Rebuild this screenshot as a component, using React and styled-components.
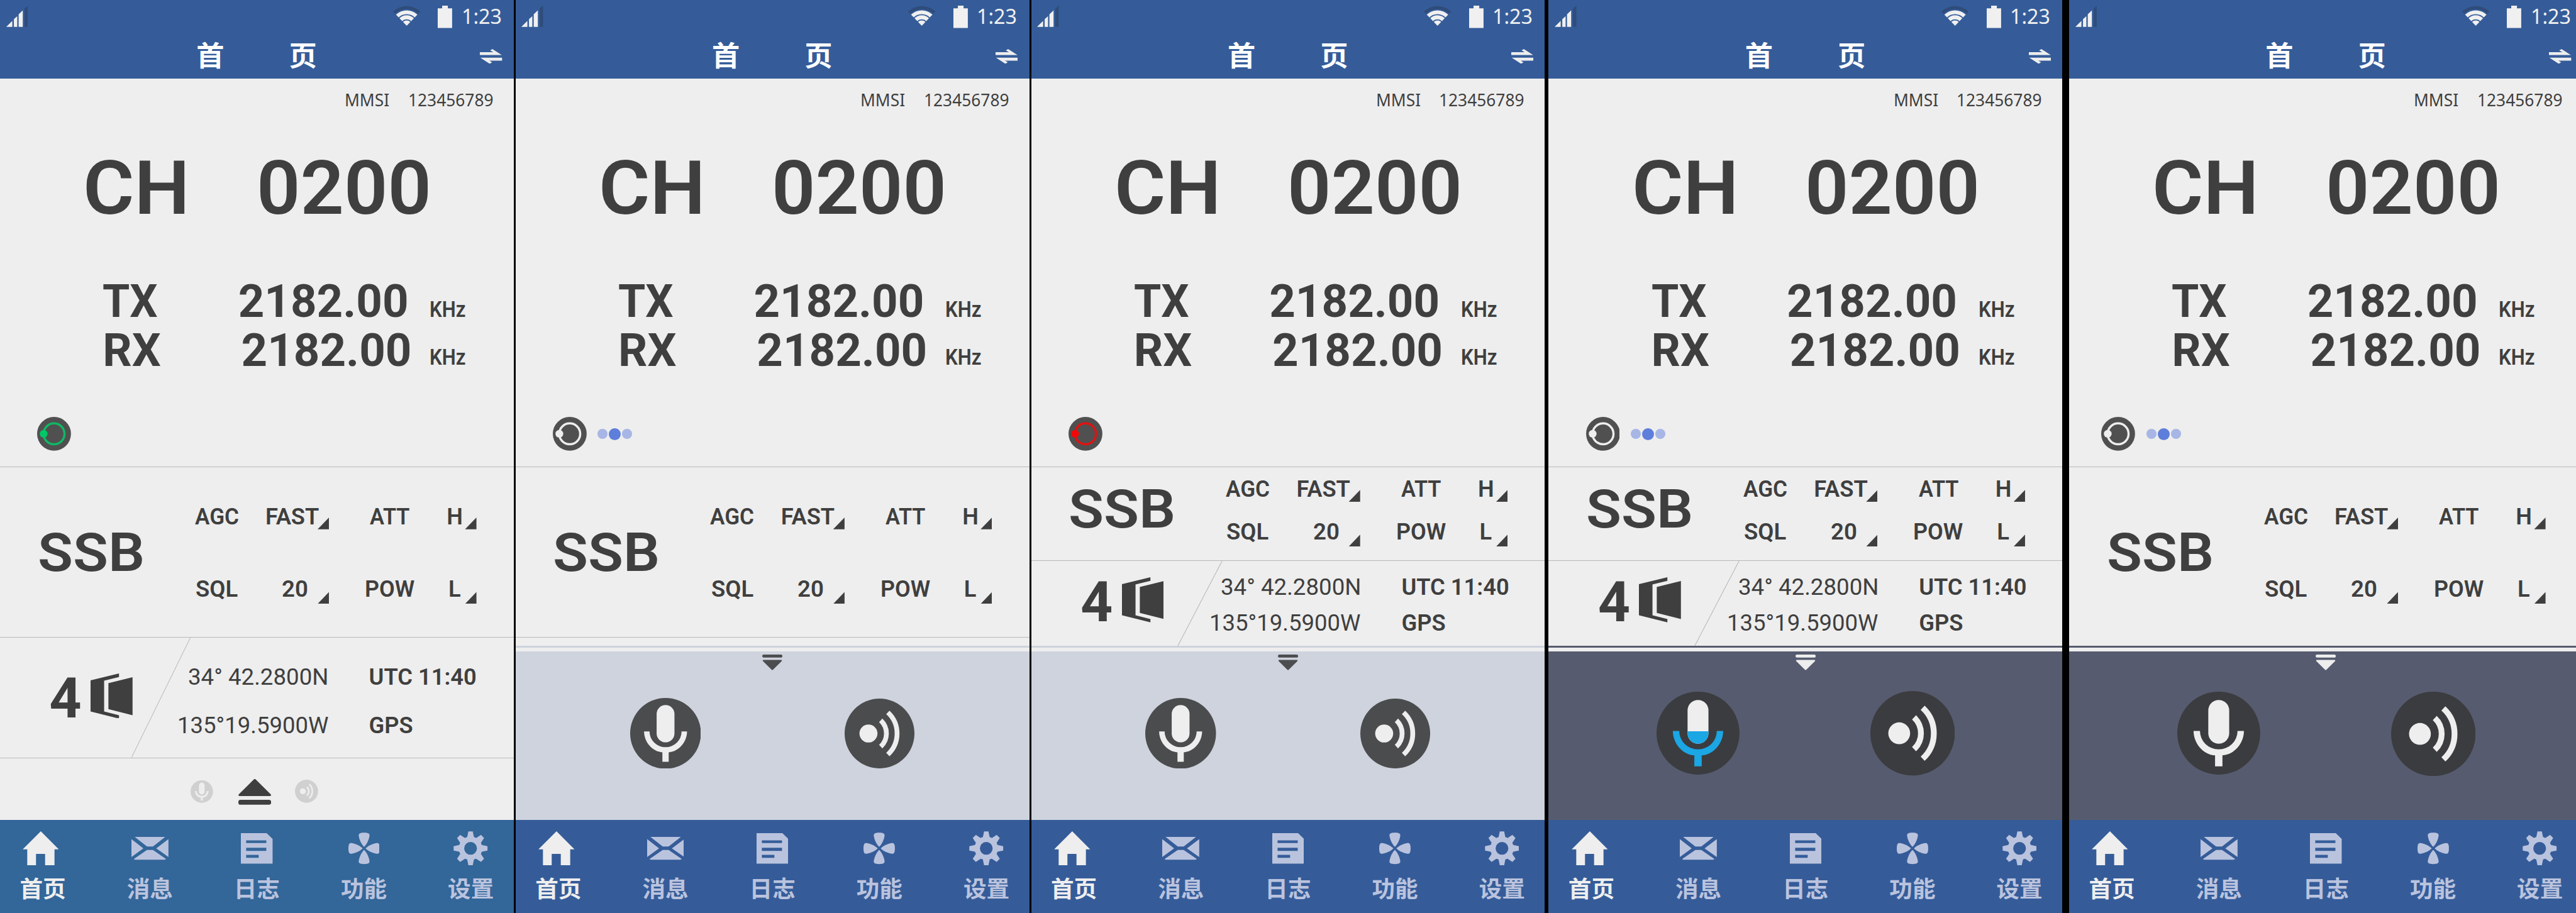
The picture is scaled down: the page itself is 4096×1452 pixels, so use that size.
import React from "react";
import styled, { createGlobalStyle, css } from "styled-components";

/* design unit: screens are specced at 1080 x 1920 */
const u = (n) => `${(n * 4096) / 5416}px`;

const C = {
  bar: "#355c99",
  nav: "#355c99",
  navAlt: "#336699",
  paper: "#eeeeee",
  ink: "#3f3f3f",
  navIdle: "#bac3de",
  line: "#b9b9b9",
};

const Global = createGlobalStyle`
  html, body { margin: 0; padding: 0; background: #000; overflow: hidden; }
  * { box-sizing: border-box; }
  svg { display: block; flex: none; }
`;

/* ---------- text ---------- */
const Text = styled.span`
  display: block;
  flex: none;
  width: max-content;
  white-space: pre;
  line-height: 1;
  font-family: Roboto, "Liberation Sans", sans-serif;
  font-size: ${(p) => u(p.$size)};
  font-weight: ${(p) => p.$weight || 400};
  margin-left: ${(p) => u(p.$dx || 0)};
  margin-top: ${(p) => u(p.$dy || 0)};
  ${(p) =>
    p.$stretch &&
    css`
      transform: scaleX(${p.$stretch});
      transform-origin: 0 50%;
    `}
`;

const Plain = styled(Text)`
  font-family: "Noto Sans", "Open Sans", sans-serif;
`;

const Han = styled(Text)`
  font-family: "Noto Sans CJK SC", sans-serif;
`;

/* ---------- page ---------- */
const Board = styled.main`
  display: flex;
  width: 4096px;
  height: 1452px;
  overflow: hidden;
  background: #000;
`;

const Screen = styled.section`
  flex: none;
  display: flex;
  flex-direction: column;
  width: ${u(1080)};
  height: ${u(1920)};
  margin-right: ${(p) => u(p.$gap)};
  background: ${C.paper};
  color: ${C.ink};
  overflow: hidden;
`;

/* ---------- header ---------- */
const Header = styled.header`
  flex: none;
  height: ${u(165.8)};
  background: ${C.bar};
  color: #fff;
`;

const StatusBar = styled.div`
  display: flex;
  align-items: flex-start;
  height: ${u(70)};
  padding: ${u(12)} 0 0 ${u(12.7)};
  color: #f0f0f0;
`;

const StatusRight = styled.div`
  display: flex;
  align-items: flex-start;
  margin-left: ${u(767.6)};
`;

const WifiSlot = styled.div`
  width: ${u(94.7)};
`;

const TitleBar = styled.div`
  display: flex;
  align-items: flex-start;
  padding: ${u(14.9)} 0 0 ${u(413)};
`;

const Title = styled.h1`
  display: flex;
  gap: ${u(136.2)};
  width: ${u(596.3)};
  margin: 0;
`;

const SwapButton = styled.div`
  padding-top: ${u(17.8)};
  color: ${C.paper};
`;

/* ---------- tuning display ---------- */
const Tuning = styled.div`
  flex: none;
  display: flex;
  flex-direction: column;
  height: ${u(815.8)};
  padding-top: ${u(26.2)};
`;

const MmsiRow = styled.div`
  display: flex;
  height: ${u(36)};
  padding-left: ${u(725)};
`;

const MmsiLabel = styled.div`
  width: ${u(133)};
`;

const ChannelRow = styled.div`
  display: flex;
  height: ${u(156)};
  margin-top: ${u(91.1)};
  padding-left: ${u(175)};
`;

const ChannelLabel = styled.div`
  width: ${u(364)};
`;

const FrequencyRow = styled.div`
  display: grid;
  grid-template-columns: ${u(285)} ${u(403)} auto;
  align-items: start;
  height: ${u(96)};
  margin-top: ${(p) => u(p.$top)};
  padding-left: ${u(215.7)};
`;

const IndicatorRow = styled.div`
  display: flex;
  align-items: center;
  gap: ${u(23.2)};
  height: ${u(71.2)};
  margin-top: ${u(90.3)};
  padding-left: ${(p) => u(p.$left)};
`;

const Dots = styled.div`
  display: flex;
  align-items: center;
  gap: ${u(2.8)};
`;

const Dot = styled.i`
  width: ${(p) => u(p.$big ? 25.2 : 20.8)};
  height: ${(p) => u(p.$big ? 25.2 : 20.8)};
  border-radius: 50%;
  background: ${(p) => (p.$big ? "#5e7edb" : "#a7b6e5")};
`;

/* ---------- mode ---------- */
const Mode = styled.div`
  flex: none;
  display: flex;
  height: ${(p) => u(p.$compact ? 196.6 : 358.4)};
  padding-left: ${u(78.7)};
  border-top: 1px solid ${C.line};
`;

const ModeName = styled.div`
  flex: none;
  width: ${u(326.6)};
  padding-top: ${(p) => u(p.$compact ? 32 : 124.2)};
`;

const Options = styled.div`
  display: flex;
  flex-direction: column;
  gap: ${(p) => u(p.$compact ? 41.5 : 104.2)};
  padding-top: ${(p) => u(p.$compact ? 22.4 : 80.2)};
`;

const OptionRow = styled.div`
  display: grid;
  grid-template-columns: ${[150, 112.4, 97.6, 172, 40.4, 24.6].map(u).join(" ")};
  align-items: start;
  height: ${u(48)};
`;

const Corner = styled.i`
  width: ${u(24)};
  height: ${u(25)};
  margin-top: ${(p) => u(p.$drop)};
  background: ${C.ink};
  clip-path: polygon(100% 0, 100% 100%, 0 100%);
`;

/* ---------- position ---------- */
const Position = styled.div`
  position: relative;
  flex: none;
  display: flex;
  height: ${(p) => u(p.$compact ? 180.3 : 253.2)};
  border-top: 1px solid ${C.line};
`;

const Slant = styled.svg`
  position: absolute;
  left: 0;
  top: 0;
  width: ${u(410)};
  height: 100%;
`;

const Zone = styled.div`
  flex: none;
  display: flex;
  width: ${(p) => u(p.$compact ? 377.6 : 374.6)};
  padding: ${(p) => u(p.$compact ? 28.2 : 68.2)} 0 0 ${u(103.6)};
`;

const DoorBox = styled.div`
  margin: ${u(6)} 0 0 auto;
  padding-right: ${(p) => u(p.$compact ? 98.8 : 95.8)};
`;

const Fixes = styled.div`
  display: flex;
  flex-direction: column;
  gap: ${(p) => u(p.$compact ? 27.7 : 54.3)};
  padding-top: ${(p) => u(p.$compact ? 31.2 : 58.9)};
`;

const FixRow = styled.div`
  display: grid;
  grid-template-columns: ${u(401)} auto;
  align-items: start;
  height: ${u(48)};
`;

/* ---------- docks ---------- */
const Tray = styled.div`
  flex: 1;
  display: flex;
  align-items: flex-start;
  padding: ${u(43.9)} 0 0 ${u(401)};
  border-top: 1px solid ${C.line};
`;

const TrayItem = styled.div`
  padding-top: ${(p) => u(p.$top || 0)};
  width: ${(p) => u(p.$width)};
`;

const Spacer = styled.div`
  flex: none;
  height: ${u(18.6)};
  border-top: ${(p) => (p.$ruled ? `1px solid ${C.line}` : "0")};
`;

const Stripe = styled.div`
  flex: none;
  height: ${u(2.9)};
  margin-bottom: ${u(8.4)};
  background: ${(p) => (p.$dark ? "#565b6f" : "#cdd3dc")};
`;

const Dock = styled.div`
  flex: 1;
  display: flex;
  flex-direction: column;
  align-items: center;
  padding-top: ${u(7.1)};
  background: ${(p) => (p.$dark ? "#565b6f" : "#ced3de")};
  color: ${(p) => (p.$dark ? "#eeeeee" : "#4c4d4e")};
`;

const DockButtons = styled.div`
  display: flex;
  justify-content: space-between;
  align-items: center;
  width: ${u(628)};
  height: ${u(178)};
  margin-top: ${u(42.7)};
`;

const ButtonSlot = styled.div`
  display: flex;
  justify-content: center;
  width: ${u(177.6)};
  padding-top: ${(p) => u(p.$low || 0)};
`;

/* ---------- navigation ---------- */
const Nav = styled.nav`
  flex: none;
  display: flex;
  justify-content: space-between;
  height: ${u(196)};
  padding: ${u(24)} ${u(22.5)} 0;
  background: ${(p) => (p.$alt ? C.navAlt : C.nav)};
`;

const NavItem = styled.div`
  display: flex;
  flex-direction: column;
  align-items: center;
  gap: ${u(22.8)};
  width: ${u(135)};
  color: ${(p) => (p.$active ? "#eeeeee" : C.navIdle)};
`;

/* ---------- drawings ---------- */
const px = (n) => (n * 4096) / 5416;
const Draw = ({ w, h, box, children }) => (
  <svg width={px(w)} height={px(h)} viewBox={box} preserveAspectRatio="none" fill="currentColor">
    {children}
  </svg>
);

const Signal = () => (
  <Draw w={45.7} h={44.7} box="0 0 137 134">
    <path d="M0 134L38 96V134ZM48 85L69 66V134H48ZM78 55L104 30V134H78Z" />
    <path d="M115 18L137 0V134H115Z" fill="#2f4c7a" />
  </Draw>
);

const Wifi = () => (
  <Draw w={57.3} h={42.3} box="0 0 172 127">
    <path d="M86 127L0 37A127 127 0 0 1 172 37Z" fill="#2f4c7a" />
    <path d="M86 127L13 51A106 106 0 0 1 159 51Z" fill={C.bar} />
    <path d="M86 127L18.5 57A98 98 0 0 1 153.5 57Z" />
    <g fill="none" stroke={C.bar} strokeWidth="7">
      <path d="M34 81A69 69 0 0 1 138 81" />
      <path d="M56 106A36 36 0 0 1 116 106" />
    </g>
  </Draw>
);

const Battery = () => (
  <Draw w={30.3} h={47} box="0 0 91 141">
    <path d="M28 0H64V17H91V141H0V17H28Z" />
  </Draw>
);

const Swap = () => (
  <Draw w={46.7} h={31} box="0 0 140 93">
    <path d="M0 20H85L65 9L79 0L138 38H0ZM3 55H140V73H60L77 83L62 93Z" />
  </Draw>
);

const Ring = ({ ring, dot }) => (
  <Draw w={71.2} h={71.2} box="-35.6 -35.6 71.2 71.2">
    <circle r="35.6" fill="#505050" />
    <circle r="22" fill="none" stroke={ring} strokeWidth="4.6" />
    <circle cx="-21.8" r="8.2" fill={dot} />
  </Draw>
);

const Door = () => (
  <Draw w={88.3} h={95} box="0 0 127 266">
    <path d="M0 41L86 0V21L41 43V224L86 246V266L0 224ZM54 57L127 22V246L54 210Z" />
  </Draw>
);

const Mic = ({ r, disc, glyph, level }) => (
  <Draw w={r * 2} h={r * 2} box="-100 -100 200 200">
    <circle r="100" fill={disc} />
    <rect x="-25.2" y="-80" width="50.4" height="105.5" rx="25.2" fill={glyph} />
    {level && <path d="M-25.2 -4.5H25.2V0.3A25.2 25.2 0 0 1 -25.2 0.3Z" fill={level} />}
    <path
      d="M-60.7 -5.2H-45.3A45.3 44.4 0 0 0 45.3 -5.2H60.7C60.7 24 38 52 8.9 53.7V80.2H-8.9V53.7C-38 52 -60.7 24 -60.7 -5.2Z"
      fill={level || glyph}
    />
  </Draw>
);

const Speaker = ({ r, disc, glyph }) => (
  <Draw w={r * 2} h={r * 2} box="-100 -100 200 200">
    <circle r="100" fill={disc} />
    <circle cx="-31.7" r="25.8" fill={glyph} />
    <g fill="none" stroke={glyph} strokeWidth="13.8">
      <path d="M3.4 -37.6A51.4 51.4 0 0 1 3.4 37.6" />
      <path d="M23.8 -60.3A82 82 0 0 1 23.8 60.3" />
    </g>
  </Draw>
);

const Eject = () => (
  <Draw w={69} h={54} box="0 0 69 54">
    <path
      d="M34.5 2L66.5 33.6H2.5Z"
      stroke="currentColor"
      strokeWidth="4.4"
      strokeLinejoin="round"
    />
    <rect y="43.6" width="69" height="10.4" rx="4.5" />
  </Draw>
);

const Collapse = () => (
  <Draw w={42.4} h={33} box="0 0 42.4 33">
    <rect width="42.4" height="6.3" rx="3" />
    <path
      d="M2.8 12.8H39.6L21.2 31Z"
      stroke="currentColor"
      strokeWidth="3.4"
      strokeLinejoin="round"
    />
  </Draw>
);

const HomeIcon = () => (
  <Draw w={84} h={72} box="0 0 84 72">
    <path d="M38.2 0L76 38H67V71.4H47.2V47.7H28.1V71.4H9.7V38H0.2Z" />
  </Draw>
);

const MailIcon = () => (
  <Draw w={77.8} h={72} box="0 -12 77.8 72">
    <path d="M7 0H70.9L45.2 20H32.7ZM0 4.6L25 23.9L0 42.1ZM77.8 4.6L52.1 23.9L77.8 42.1ZM32.7 27.5H45.2L73 46.4L69.5 47.9H7.6L4.8 46.4Z" />
  </Draw>
);

const LogIcon = () => (
  <Draw w={66.7} h={72} box="0 -4.1 66.7 72">
    <path
      fillRule="evenodd"
      d="M0 0H54.2L66.7 12.1V63.9H0ZM11.1 15V20.7H53.5V15ZM11.1 30.7V37.1H53.5V30.7ZM11.1 45.4V51.8H37.5V45.4Z"
    />
  </Draw>
);

const petal =
  "M0 -3.2C-4.5 -7 -10.2 -17.5 -11.3 -26.5C-11.8 -31 -9 -33 0 -33C9 -33 11.8 -31 11.3 -26.5C10.2 -17.5 4.5 -7 0 -3.2Z";

const CloverIcon = () => (
  <Draw w={66} h={72} box="-33 -36 66 72">
    {[0, 90, 180, 270].map((a) => (
      <path key={a} d={petal} transform={`rotate(${a})`} />
    ))}
  </Draw>
);

const GearIcon = () => (
  <Draw w={72} h={72} box="-36 -36 72 72">
    <circle r="19" fill="none" stroke="currentColor" strokeWidth="11.2" />
    {[0, 45, 90, 135, 180, 225, 270, 315].map((a) => (
      <path key={a} d="M-7.4 -22L-4.6 -35.6H4.6L7.4 -22Z" transform={`rotate(${a})`} />
    ))}
  </Draw>
);

/* ---------- parts ---------- */
function TopBar() {
  return (
    <Header>
      <StatusBar>
        <Signal />
        <StatusRight>
          <WifiSlot>
            <Wifi />
          </WifiSlot>
          <Battery />
          <Plain $size={44.4} $stretch={0.96} $dx={19}>1:23</Plain>
        </StatusRight>
      </StatusBar>
      <TitleBar>
        <Title>
          <Han $size={58.5} $weight={700}>首</Han>
          <Han $size={58.5} $weight={700}>页</Han>
        </Title>
        <SwapButton>
          <Swap />
        </SwapButton>
      </TitleBar>
    </Header>
  );
}

const RINGS = {
  green: ["#10b765", "#00c765"],
  red: ["#e01212", "#f40606"],
  idle: ["#eeeeee", "#eeeeee"],
};

const Big = (p) => <Text $size={96} $weight={700} {...p} />;
const Unit = (p) => <Text $size={45.5} $weight={600} $stretch={0.905} {...p} />;

function TuningPanel({ ring, busy, left = 78.2 }) {
  const [stroke, dot] = RINGS[ring];
  return (
    <Tuning>
      <MmsiRow>
        <MmsiLabel>
          <Plain $size={36} $stretch={0.967}>MMSI</Plain>
        </MmsiLabel>
        <Plain $size={36} $stretch={0.967}>123456789</Plain>
      </MmsiRow>
      <ChannelRow>
        <ChannelLabel>
          <Text $size={156} $weight={600} $stretch={1.056}>CH</Text>
        </ChannelLabel>
        <Text $size={156} $weight={600} $stretch={1.031}>0200</Text>
      </ChannelRow>
      <FrequencyRow $top={111.9}>
        <Big $stretch={0.963}>TX</Big>
        <Big>2182.00</Big>
        <Unit $dy={41.4}>KHz</Unit>
      </FrequencyRow>
      <FrequencyRow $top={7.6}>
        <Big>RX</Big>
        <Big $dx={6.4}>2182.00</Big>
        <Unit $dy={37.6}>KHz</Unit>
      </FrequencyRow>
      <IndicatorRow $left={left}>
        <Ring ring={stroke} dot={dot} />
        {busy && (
          <Dots>
            <Dot />
            <Dot $big />
            <Dot />
          </Dots>
        )}
      </IndicatorRow>
    </Tuning>
  );
}

const Opt = (p) => <Text $size={48} $weight={600} {...p} />;

function ModePanel({ compact }) {
  return (
    <Mode $compact={compact}>
      <ModeName $compact={compact}>
        <Text $size={112} $weight={600} $stretch={1.083}>SSB</Text>
      </ModeName>
      <Options $compact={compact}>
        <OptionRow>
          <Opt $dx={4} $stretch={0.967}>AGC</Opt>
          <Opt $dx={2.6}>FAST</Opt>
          <Corner $drop={25} />
          <Opt $dx={12.4} $stretch={0.948}>ATT</Opt>
          <Opt $dx={2}>H</Opt>
          <Corner $drop={25} />
        </OptionRow>
        <OptionRow>
          <Opt $dx={5.6} $stretch={1.006}>SQL</Opt>
          <Opt $dx={37.6} $stretch={1.01}>20</Opt>
          <Corner $drop={29.6} />
          <Opt $dx={1.6} $stretch={0.988}>POW</Opt>
          <Opt $dx={5.4}>L</Opt>
          <Corner $drop={29.6} />
        </OptionRow>
      </Options>
    </Mode>
  );
}

function PositionPanel({ compact }) {
  return (
    <Position $compact={compact}>
      <Slant viewBox="0 0 410 100" preserveAspectRatio="none">
        <path
          d={compact ? "M401 0L307.7 100" : "M400.4 0L276.7 100"}
          stroke="#b4b4b4"
          strokeWidth="1"
          vectorEffect="non-scaling-stroke"
        />
      </Slant>
      <Zone $compact={compact}>
        <Text $size={118.5} $weight={700}>4</Text>
        <DoorBox $compact={compact}>
          <Door />
        </DoorBox>
      </Zone>
      <Fixes $compact={compact}>
        <FixRow>
          <Text $size={48} $weight={450} $dx={20.8} $stretch={1.01}>34° 42.2800N</Text>
          <Opt>UTC 11:40</Opt>
        </FixRow>
        <FixRow>
          <Text $size={48} $weight={450} $dx={-2.2} $stretch={1.006}>135°19.5900W</Text>
          <Opt>GPS</Opt>
        </FixRow>
      </Fixes>
    </Position>
  );
}

function ClosedTray() {
  return (
    <Tray>
      <TrayItem $width={100.2} $top={2.4}>
        <Mic r={23.6} disc="#d0d0d0" glyph="#eeeeee" />
      </TrayItem>
      <TrayItem $width={119.6}>
        <Eject />
      </TrayItem>
      <TrayItem $width={49} $top={1.8}>
        <Speaker r={24.3} disc="#d0d0d0" glyph="#eeeeee" />
      </TrayItem>
    </Tray>
  );
}

function OpenDock({ dark, level }) {
  const disc = dark ? "#3b3c3f" : "#4b4c4d";
  return (
    <>
      <Stripe $dark={dark} />
      <Dock $dark={dark}>
        <Collapse />
        <DockButtons>
          <ButtonSlot>
            <Mic r={dark ? 87.2 : 74.4} disc={disc} glyph="#eeeeee" level={level} />
          </ButtonSlot>
          <ButtonSlot $low={2}>
            <Speaker r={dark ? 88.8 : 73.4} disc={disc} glyph="#eeeeee" />
          </ButtonSlot>
        </DockButtons>
      </Dock>
    </>
  );
}

const TABS = [
  ["首页", HomeIcon],
  ["消息", MailIcon],
  ["日志", LogIcon],
  ["功能", CloverIcon],
  ["设置", GearIcon],
];

function BottomNav({ alt }) {
  return (
    <Nav $alt={alt}>
      {TABS.map(([label, Icon], i) => (
        <NavItem key={label} $active={i === 0}>
          <Icon />
          <Han $size={48.4} $weight={700}>{label}</Han>
        </NavItem>
      ))}
    </Nav>
  );
}

export default function App() {
  return (
    <Board>
      <Global />
      <Screen $gap={4}>
        <TopBar />
        <TuningPanel ring="green" />
        <ModePanel />
        <PositionPanel />
        <ClosedTray />
        <BottomNav alt />
      </Screen>
      <Screen $gap={4}>
        <TopBar />
        <TuningPanel ring="idle" busy />
        <ModePanel />
        <Spacer $ruled />
        <OpenDock />
        <BottomNav />
      </Screen>
      <Screen $gap={8}>
        <TopBar />
        <TuningPanel ring="red" />
        <ModePanel compact />
        <PositionPanel compact />
        <OpenDock />
        <BottomNav />
      </Screen>
      <Screen $gap={14.4}>
        <TopBar />
        <TuningPanel ring="idle" busy />
        <ModePanel compact />
        <PositionPanel compact />
        <OpenDock dark level="#1ba6e4" />
        <BottomNav />
      </Screen>
      <Screen $gap={0}>
        <TopBar />
        <TuningPanel ring="idle" busy left={68} />
        <ModePanel />
        <Spacer />
        <OpenDock dark />
        <BottomNav />
      </Screen>
    </Board>
  );
}
